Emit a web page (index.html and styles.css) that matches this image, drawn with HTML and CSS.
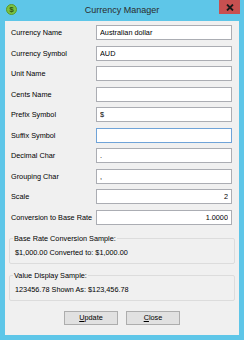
FILE: index.html
```html
<!DOCTYPE html>
<html lang="en">
<head>
    <meta charset="UTF-8">
    <meta name="viewport" content="width=device-width, initial-scale=1.0">
    <title>Currency Manager</title>
    <link rel="stylesheet" href="styles.css">
</head>
<body>

    <div class="window">
        <div class="titlebar">
            <svg class="app-icon" width="11" height="11" viewBox="0 0 11 11">
                <circle cx="5.5" cy="5.5" r="5" fill="#7cc242" stroke="#5a9a2a" stroke-width="1"/>
                <text x="5.5" y="8.3" text-anchor="middle" font-family="Liberation Sans, sans-serif" font-size="8" font-weight="bold" fill="#2f5a14">$</text>
            </svg>
            <span class="title">Currency Manager</span>
            <div class="close-btn">
                <svg width="8" height="7" viewBox="0 0 8 7">
                    <path d="M1 0.5 L7 6.5 M7 0.5 L1 6.5" stroke="#1a1a1a" stroke-width="1.8"/>
                </svg>
            </div>
        </div>

        <div class="client">
            <div class="form">
                <label>Currency Name</label>
                <input class="field" type="text" value="Australian dollar">
                <label>Currency Symbol</label>
                <input class="field" type="text" value="AUD">
                <label>Unit Name</label>
                <input class="field" type="text" value="">
                <label>Cents Name</label>
                <input class="field" type="text" value="">
                <label>Prefix Symbol</label>
                <input class="field" type="text" value="$">
                <label>Suffix Symbol</label>
                <input class="field focused" type="text" value="">
                <label>Decimal Char</label>
                <input class="field" type="text" value=".">
                <label>Grouping Char</label>
                <input class="field" type="text" value=",">
                <label>Scale</label>
                <input class="field num" type="text" value="2">
                <label>Conversion to Base Rate</label>
                <input class="field num" type="text" value="1.0000">
            </div>

            <fieldset class="sample first">
                <legend>Base Rate Conversion Sample:</legend>
                <div class="sample-text">$1,000.00 Converted to: $1,000.00</div>
            </fieldset>

            <fieldset class="sample">
                <legend>Value Display Sample:</legend>
                <div class="sample-text">123456.78 Shown As: $123,456.78</div>
            </fieldset>

            <div class="buttons">
                <button class="btn"><u>U</u>pdate</button>
                <button class="btn"><u>C</u>lose</button>
            </div>
        </div>
    </div>

</body>
</html>
```

FILE: styles.css
```css
body {
    margin: 0;
    padding: 0;
    font-family: "Liberation Sans", Arial, sans-serif;
}
.window {
    width: 244px;
    height: 340px;
    box-sizing: border-box;
    background: #5ec6e8;
    padding: 0 5px 5px 5px;
    display: flex;
    flex-direction: column;
}
.titlebar {
    height: 21px;
    display: grid;
    grid-template-columns: 1fr auto 1fr;
    align-items: start;
}
.app-icon {
    margin-top: 4px;
    margin-left: 1px;
}
.title {
    font-size: 9px;
    color: #2b2b2b;
    line-height: 10px;
    margin-top: 5px;
}
.close-btn {
    justify-self: end;
    width: 21px;
    height: 14px;
    margin-right: -1px;
    background: #c75050;
    display: flex;
    align-items: center;
    justify-content: center;
}
.client {
    flex: 1;
    background: #f0f0f0;
    padding: 4px 0 0 0;
    display: flex;
    flex-direction: column;
}
.form {
    display: grid;
    grid-template-columns: 85px 136px;
    grid-auto-rows: 15px;
    row-gap: 5.5px;
    padding-left: 6px;
}
.form label {
    font-size: 7.3px;
    color: #000;
    line-height: 15px;
}
.field {
    box-sizing: border-box;
    width: 136px;
    height: 15px;
    margin: 0;
    padding: 0 3px;
    border: 1px solid #abadb3;
    background: #fff;
    font-family: "Liberation Sans", Arial, sans-serif;
    font-size: 7.3px;
    color: #000;
    outline: none;
}
.field.focused {
    border-color: #6fa3d8;
}
.field.num {
    text-align: right;
}
.sample {
    margin: 0 4px;
    padding: 5px 5px 6px 5px;
    border: 1px solid #dcdcdc;
    border-radius: 2px;
}
.sample.first {
    margin-top: 9px;
    margin-bottom: 7px;
}
.sample legend {
    font-size: 7.3px;
    line-height: 9px;
    padding: 0 1px;
    margin-left: -2px;
    color: #000;
}
.sample-text {
    font-size: 7.3px;
    line-height: 9px;
    color: #000;
}
.buttons {
    display: flex;
    justify-content: center;
    gap: 8px;
    margin-top: 10px;
}
.btn {
    width: 54px;
    height: 14px;
    box-sizing: border-box;
    padding: 0;
    border: 1px solid #adadad;
    background: #e1e1e1;
    font-family: "Liberation Sans", Arial, sans-serif;
    font-size: 7.3px;
    color: #000;
}
```
